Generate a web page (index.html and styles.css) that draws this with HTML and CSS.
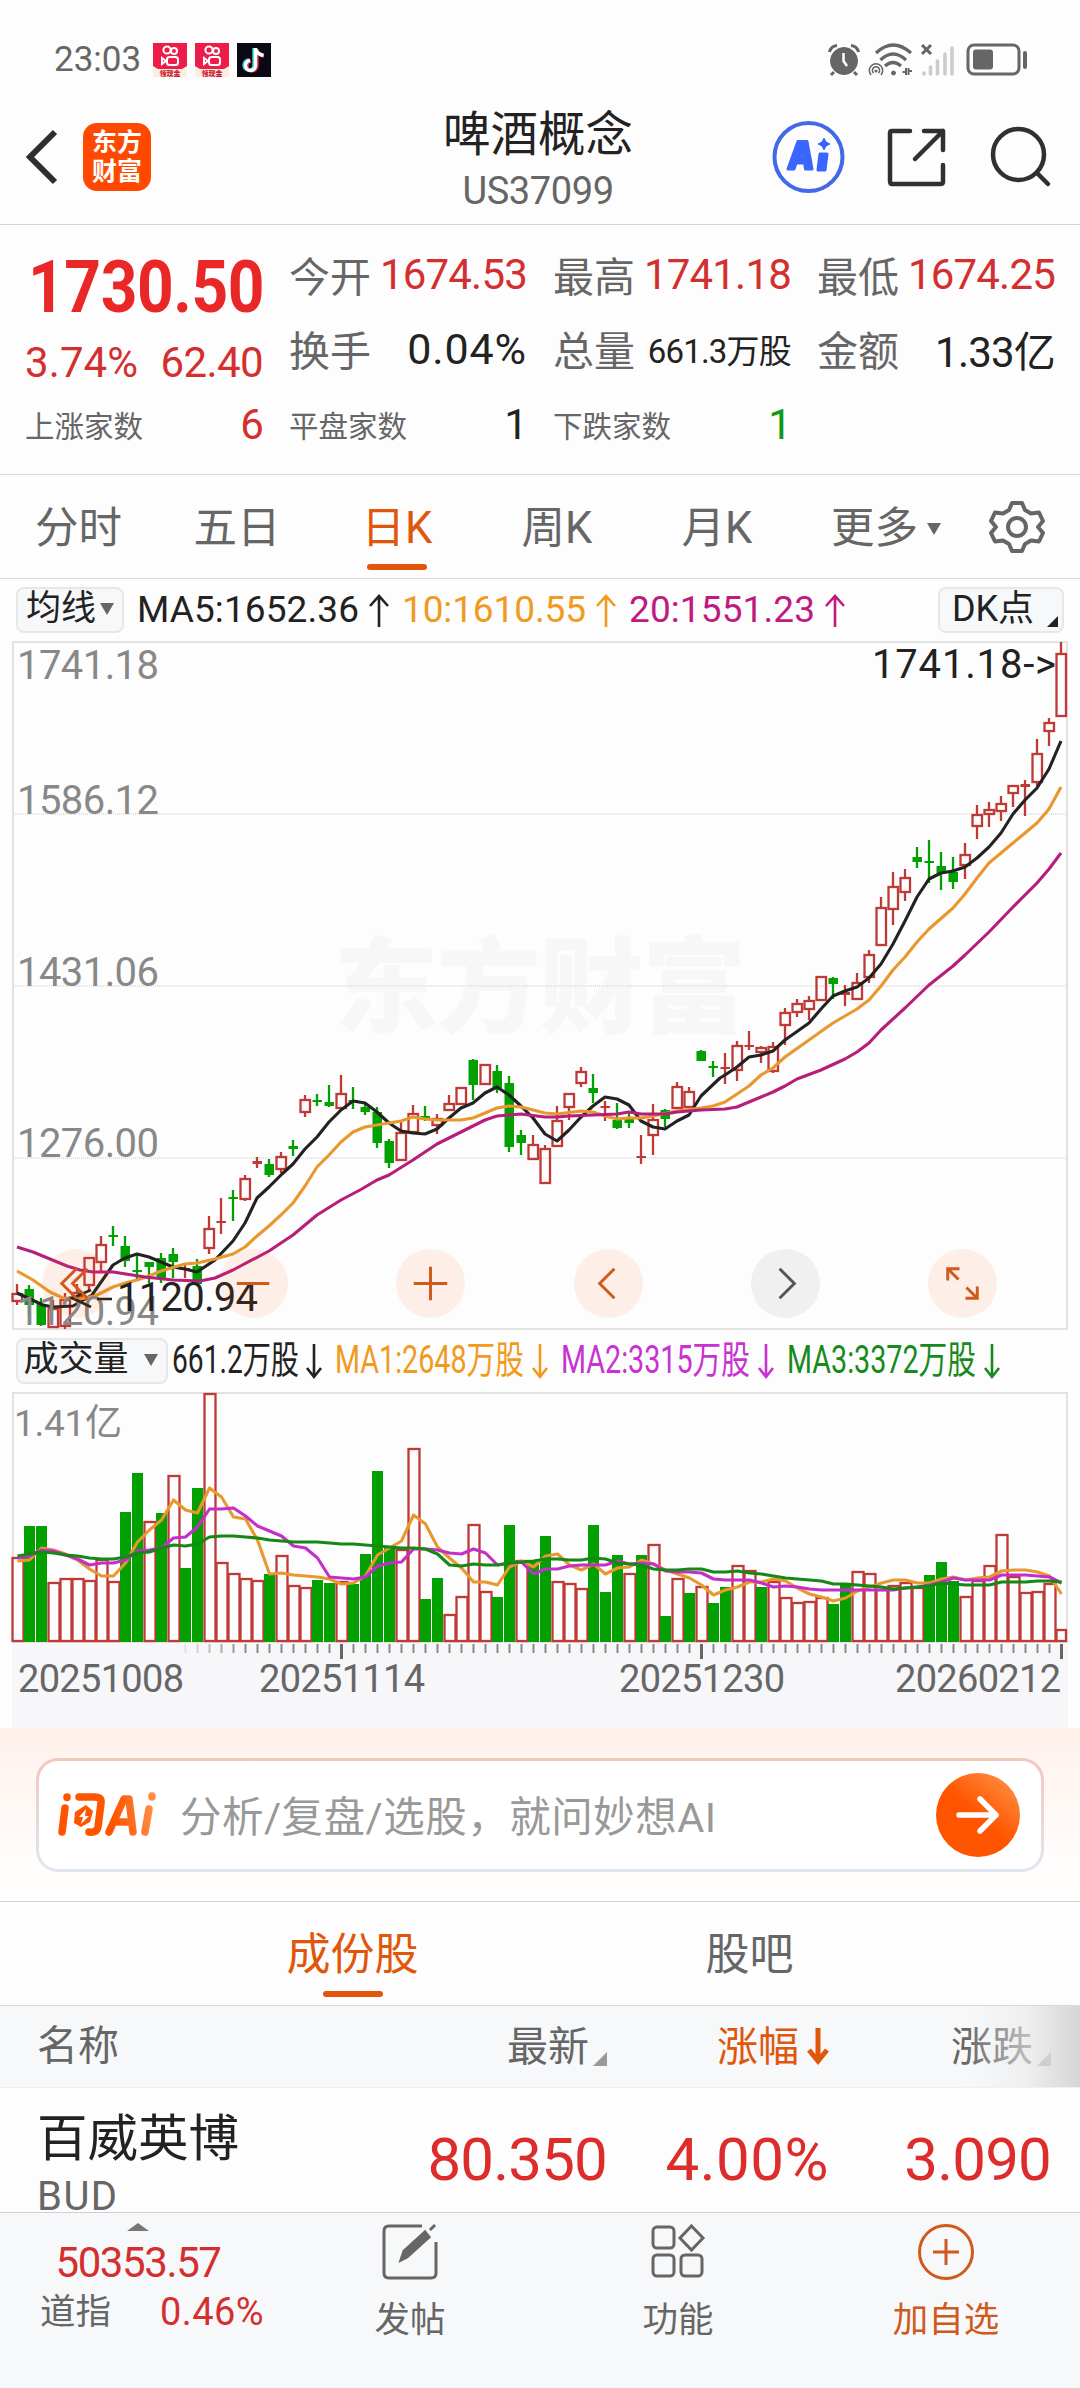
FILE: index.html
```html
<!DOCTYPE html>
<html lang="zh-CN">
<head>
    <meta charset="UTF-8">
    <title>啤酒概念 US37099</title>
    <link rel="stylesheet" href="styles.css">
</head>
<body>
  <div class="status-bar">
    <span class="clock">23:03</span>
    <svg class="app-badge" viewBox="0 0 34 34">
      <rect width="34" height="34" fill="#fdeedd"/>
      <path d="M0 0H34V23L29 26H5L0 23Z" fill="#ee1c4a"/>
      <g fill="none" stroke="#fff" stroke-width="2"><circle cx="14" cy="7" r="3.6"/><circle cx="21" cy="8" r="3"/><rect x="14" y="14" width="11" height="8" rx="2.5"/><path d="M13 18L9 15V21Z"/></g>
      <text x="17" y="33" font-size="7" font-weight="900" fill="#c81a35" text-anchor="middle">领现金</text>
    </svg>
    <svg class="app-badge" viewBox="0 0 34 34">
      <rect width="34" height="34" fill="#fdeedd"/>
      <path d="M0 0H34V23L29 26H5L0 23Z" fill="#ee1c4a"/>
      <g fill="none" stroke="#fff" stroke-width="2"><circle cx="14" cy="7" r="3.6"/><circle cx="21" cy="8" r="3"/><rect x="14" y="14" width="11" height="8" rx="2.5"/><path d="M13 18L9 15V21Z"/></g>
      <text x="17" y="33" font-size="7" font-weight="900" fill="#c81a35" text-anchor="middle">领现金</text>
    </svg>
    <svg class="app-badge" viewBox="0 0 34 34">
      <rect width="34" height="34" fill="#0b0a14"/>
      <g fill="none" stroke-width="3.4">
        <path d="M17 5V22A5 5 0 1 1 12 17M17 6Q19 11 26 12" stroke="#35d6dc"/>
        <path d="M20 6V23A5 5 0 1 1 14 18M20 7Q21 12 27 13" stroke="#e8304e"/>
        <path d="M18.500 5V22.500A5 5 0 1 1 13 17.500M18.500 6Q20 11 26.500 12.500" stroke="#fff"/>
      </g>
    </svg>
    <svg class="system-icons" viewBox="0 0 200 34">
      <g fill="#666" stroke="#666">
        <circle cx="16" cy="18" r="13.500"/>
        <path d="M1.500 9Q3 3 9 2.500M30.500 9Q29 3 23 2.500M6 29L3 32M26 29L29 32" fill="none" stroke-width="3"/>
        <path d="M15.500 10V18L19 23" fill="none" stroke="#fff" stroke-width="2.500"/>
        <g fill="none" stroke-width="3.200"><path d="M48 10Q65-6 83 10M52.500 17Q65 5 78 17M57 23Q65 16 73 23"/></g>
        <circle cx="65.500" cy="30" r="2"/>
        <g fill="none" stroke-width="1.500"><path d="M43 32A6.700 6.700 0 1 1 53 32M45.500 30A3.600 3.600 0 1 1 50.500 30"/><circle cx="48" cy="28" r=".8"/></g>
        <path d="M78 25V32M74.500 29H78M80.500 25V32M84 28H81" stroke-width="2" fill="none"/>
        <path d="M94 2L103 11M103 2L94 11" stroke-width="3"/>
      </g>
      <path d="M96 30V31M102.500 24V31M109.500 18V31M117 11V31M124 5V31" stroke="#ccc" stroke-width="3.600" stroke-linecap="round"/>
      <rect x="140" y="2" width="51" height="29" rx="6" fill="none" stroke="#666" stroke-width="3"/>
      <rect x="145" y="6.500" width="20" height="20" rx="3" fill="#666"/>
      <path d="M197 10V24" stroke="#666" stroke-width="4" stroke-linecap="round"/>
    </svg>
  </div>

  <div class="header">
    <svg class="back" viewBox="0 0 34 56"><path d="M29 3L4 28L29 53" fill="none" stroke="#2e2e2e" stroke-width="6"/></svg>
    <div class="app-logo"><span>东方</span><span>财富</span></div>
    <div class="title">
      <h1>啤酒概念</h1>
      <p>US37099</p>
    </div>
    <svg class="header-icons" viewBox="0 0 280 74">
      <circle cx="36.500" cy="37" r="34" fill="none" stroke="#4169e8" stroke-width="4"/>
      <g fill="#3a66ff" stroke="#3a66ff" stroke-width="3" stroke-linejoin="round">
        <path fill-rule="evenodd" d="M16 49L26 21.500H35L40 49H33.500L32.500 43H24L22 49ZM26.500 38H31.500L30.500 30Z"/>
        <path d="M48 34H55L53 50H46Z"/>
        <path d="M52 18L54 22L58 24L54 26L52 30L50 26L46 24L50 22Z" stroke-width="1"/>
      </g>
      <g fill="none" stroke="#303030" stroke-width="4.500" stroke-linecap="round" stroke-linejoin="round">
        <path d="M138 11H120Q118 11 118 13V61Q118 64 120 64H168Q171 64 171 62V45M152 11H171V30M171 11L143 39"/>
        <circle cx="246.500" cy="34.500" r="25.500"/>
        <path d="M265 53L276 64"/>
      </g>
    </svg>
  </div>

  <div class="quote">
    <div class="price-box">
      <div class="price">1730.50</div>
      <div class="change"><span class="wide">3.74%</span><span>62.40</span></div>
    </div>
    <div class="item"><label>今开</label><span class="up">1674.53</span></div>
    <div class="item"><label>最高</label><span class="up">1741.18</span></div>
    <div class="item"><label>最低</label><span class="up">1674.25</span></div>
    <div class="item second"><label>换手</label><span class="wide">0.04%</span></div>
    <div class="item second"><label>总量</label><span class="small">661.3万股</span></div>
    <div class="item second"><label>金额</label><span>1.33亿</span></div>
    <div class="item count"><label>上涨家数</label><span class="up">6</span></div>
    <div class="item count"><label>平盘家数</label><span>1</span></div>
    <div class="item count"><label>下跌家数</label><span class="down">1</span></div>
  </div>

  <div class="period-tabs">
    <span>分时</span>
    <span>五日</span>
    <span><b class="active">日K</b></span>
    <span>周K</span>
    <span>月K</span>
    <span class="more">更多<i class="triangle"></i></span>
    <svg class="gear" viewBox="0 0 54 54">
      <path d="M22 3H32L35 10L41 13.500L49 12.500L53 21L48 27L53 33L49 41.500L41 40.500L35 44L32 51H22L19 44L13 40.500L5 41.500L1 33L6 27L1 21L5 12.500L13 13.500L19 10Z"/>
      <circle cx="27" cy="27" r="9"/>
    </svg>
  </div>

  <div class="legend">
    <div class="pill">均线<i class="triangle"></i></div>
    <svg class="legend-text ma-text" viewBox="0 0 720 50">
      <g font-size="37">
        <text x="3" y="37" textLength="222" fill="#222">MA5:1652.36</text>
        <text x="268" y="37" textLength="184" fill="#f09a1e">10:1610.55</text>
        <text x="495" y="37" textLength="186" fill="#c01a80">20:1551.23</text>
      </g>
      <g fill="none" stroke-width="2.600">
        <path d="M245 42V12M236 21L245 11L254 21" stroke="#222"/>
        <path d="M472 42V12M463 21L472 11L481 21" stroke="#f09a1e"/>
        <path d="M701 42V12M692 21L701 11L710 21" stroke="#c01a80"/>
      </g>
    </svg>
    <div class="pill dk">DK点<i class="corner"></i></div>
  </div>

  <div class="kline">
    <svg id="klineChart" viewBox="0 640 1080 692"></svg>
    <div class="chart-tools">
      <button><svg viewBox="0 0 70 70"><path d="M35 20L20 35L35 50M46 20L31 35L46 50"/></svg></button>
      <button><svg viewBox="0 0 70 70"><path d="M18 35H51"/></svg></button>
      <button><svg viewBox="0 0 70 70"><path d="M18 35H52M35 18V52"/></svg></button>
      <button><svg viewBox="0 0 70 70"><path d="M41 20L26 35L41 50"/></svg></button>
      <button class="disabled"><svg viewBox="0 0 70 70"><path d="M29 20L44 35L29 50"/></svg></button>
      <button><svg viewBox="0 0 70 70"><path d="M20 32V20H32M20 20L31 31M38 50H50V38M50 50L39 39"/></svg></button>
    </div>
  </div>

  <div class="legend volume-legend">
    <div class="pill">成交量<i class="triangle"></i></div>
    <svg class="legend-text vol-text" viewBox="0 0 850 50">
      <g font-size="38">
        <text x="4" y="37" textLength="127" lengthAdjust="spacingAndGlyphs" fill="#222">661.2万股</text>
        <text x="167" y="37" textLength="189" lengthAdjust="spacingAndGlyphs" fill="#f09a1e">MA1:2648万股</text>
        <text x="393" y="37" textLength="189" lengthAdjust="spacingAndGlyphs" fill="#c832d0">MA2:3315万股</text>
        <text x="619" y="37" textLength="189" lengthAdjust="spacingAndGlyphs" fill="#178a1a">MA3:3372万股</text>
      </g>
      <g fill="none" stroke-width="2.600">
        <path d="M146 8V41M139 32L146 41L153 32" stroke="#222"/>
        <path d="M372 8V41M365 32L372 41L379 32" stroke="#f09a1e"/>
        <path d="M598 8V41M591 32L598 41L605 32" stroke="#c832d0"/>
        <path d="M824 8V41M817 32L824 41L831 32" stroke="#178a1a"/>
      </g>
    </svg>
  </div>

  <svg id="volumeChart" class="volume" viewBox="0 1388 1080 340"></svg>

  <div class="ask">
    <div class="ask-box">
      <svg class="ask-logo" viewBox="0 0 100 50">
        <defs><linearGradient id="askFill" gradientUnits="userSpaceOnUse" x1="0" y1="25" x2="100" y2="15"><stop offset=".55" stop-color="#ff5500"/><stop offset="1" stop-color="#ff9350"/></linearGradient></defs>
        <g fill="none" stroke="url(#askFill)" stroke-width="7.500" stroke-linecap="round" stroke-linejoin="round">
          <path d="M7 18L4 42M9 7V7.500M21 7H37Q44 7 43 13L40 37Q39 43 31 42"/>
          <path d="M51 42L66 9H71L75 42M60 32H72M91 19L87 42M94 6V7"/>
        </g>
        <path d="M28 15L17 22L16 33L23 37L32 32L35 21Z" fill="#ff5500"/>
        <path d="M28 19L21 27H25L23 34L31 26H27Z" fill="#fff"/>
      </svg>
      <span>分析/复盘/选股，就问妙想AI</span>
      <div class="send"><svg viewBox="0 0 84 84"><path d="M23 42H60M44 26L60 42L44 58"/></svg></div>
    </div>
  </div>

  <div class="list-tabs">
    <span class="active">成份股</span>
    <span>股吧</span>
  </div>

  <div class="table-head">
    <span>名称</span>
    <span>最新<i class="corner"></i></span>
    <span class="sorted">涨幅<svg viewBox="0 0 22 36"><path d="M11 0V32M2 22L11 33L20 22"/></svg></span>
    <span>涨跌<i class="corner"></i></span>
  </div>

  <div class="stock-row">
    <div class="stock-name"><strong>百威英博</strong><small>BUD</small></div>
    <span>80.350</span>
    <span class="wide">4.00%</span>
    <span>3.090</span>
  </div>

  <div class="bottom-bar">
    <div class="index">
      <i class="up-arrow"></i>
      <b>50353.57</b>
      <div><label>道指</label><em>0.46%</em></div>
    </div>
    <div class="action">
      <svg viewBox="0 0 60 60"><path d="M42 4H9Q4 4 4 9V51Q4 56 9 56H51Q56 56 56 51V20"/><path d="M21 38L24 29L45 10L49 15L27 35ZM50 8L55 3" fill="#666"/></svg>
      <span>发帖</span>
    </div>
    <div class="action">
      <svg viewBox="0 0 60 60"><rect x="5" y="5" width="21" height="21" rx="4"/><rect x="5" y="33" width="21" height="21" rx="4"/><rect x="33" y="33" width="21" height="21" rx="4"/><path d="M43.500 4L55 16L43.500 28L32 16Z"/></svg>
      <span>功能</span>
    </div>
    <div class="action add">
      <svg viewBox="0 0 60 60"><circle cx="30" cy="30" r="26.500"/><path d="M17 30H43M30 17V43"/></svg>
      <span>加自选</span>
    </div>
  </div>

  <script src="chart.js"></script>
</body>
</html>
```
FILE: styles.css
```css
* {
box-sizing: border-box;
margin: 0;
padding: 0;
}

body {
width: 1080px;
height: 2388px;
overflow: hidden;
background-color: #fdfdfd;
font-family: Roboto, "Noto Sans CJK SC", sans-serif;
color: #222;
}

svg {
display: block;
flex: none;
overflow: visible;
}

i, em {
font-style: normal;
}

/* status bar */
.status-bar {
display: flex;
align-items: center;
height: 100px;
padding: 20px 52px 0 54px;
gap: 8px;
}

.clock {
font-size: 35px;
line-height: 40px;
color: #666;
width: 91px;
}

.app-badge {
width: 34px;
height: 34px;
}

.system-icons {
width: 200px;
height: 34px;
margin-left: auto;
}

/* header */
.header {
display: flex;
align-items: center;
height: 125px;
padding: 0 28px 10px 26px;
border-bottom: 1px solid #d4d4d4;
}

.back {
width: 34px;
height: 56px;
}

.app-logo {
display: flex;
flex-direction: column;
justify-content: center;
align-items: center;
width: 68px;
height: 68px;
margin-left: 23px;
border-radius: 14px;
background-color: #ff4800;
color: #fff;
font-size: 25px;
font-weight: 700;
line-height: 29px;
}

.title {
flex: 1;
text-align: center;
padding: 8px 0 0 153px;
}

.title h1 {
font-size: 47.500px;
font-weight: 400;
line-height: 56px;
}

.title p {
font-size: 38px;
line-height: 48px;
letter-spacing: -0.4px;
color: #666;
margin-top: 4px;
}

.header-icons {
width: 280px;
height: 74px;
}

/* quote */
.quote {
display: grid;
grid-template-columns: repeat(4, 238px);
grid-template-rows: repeat(3, 75px);
column-gap: 26px;
height: 250px;
padding: 12px 25px 0;
border-bottom: 1px solid #d8d8d8;
}

.price-box {
grid-row: 1 / 3;
height: 150px;
margin-top: 13px;
color: #e92727;
}

.price {
width: 265px;
margin-left: 3px;
font-size: 72px;
font-weight: 700;
line-height: 75px;
letter-spacing: -0.5px;
transform: scaleX(0.89);
transform-origin: left;
}

.change {
display: flex;
justify-content: space-between;
font-size: 42px;
line-height: 75px;
letter-spacing: -0.6px;
color: #d42f2f;
}

.item {
display: flex;
justify-content: space-between;
align-items: center;
font-size: 42px;
letter-spacing: -0.8px;
white-space: nowrap;
padding-bottom: 1px;
}

.item.second {
padding-bottom: 4px;
}

.item.second span {
padding-top: 2px;
}

.item label {
font-size: 41px;
letter-spacing: 0;
color: #666;
}

.item .small {
font-size: 33px;
}

.item .wide {
font-size: 43px;
letter-spacing: 0.9px;
}

.change .wide {
letter-spacing: 0.1px;
}

.item.count label {
font-size: 29.500px;
}

.item .up {
color: #d42f2f;
}

.item .down {
color: #109a14;
}

/* period tabs */
.period-tabs {
display: grid;
grid-template-columns: 157px repeat(5, 160px) 120px;
justify-items: center;
height: 104px;
border-bottom: 1px solid #d8d8d8;
font-size: 43.500px;
line-height: 107px;
color: #666;
}

.active {
position: relative;
font-weight: 400;
color: #e0560b;
}

.active::after {
content: "";
position: absolute;
left: 50%;
bottom: 11px;
width: 60px;
height: 6px;
margin-left: -30px;
border-radius: 3px;
background-color: #e0560b;
}

.period-tabs .active::after {
bottom: -16px;
}

.more {
display: flex;
align-items: center;
padding-left: 18px;
}

.triangle {
display: inline-block;
border: 7px solid transparent;
border-top: 12px solid #666;
border-bottom: 0;
}

.more .triangle {
margin-left: 9px;
}

.gear {
width: 54px;
height: 54px;
margin-top: 25px;
fill: none;
stroke: #666;
stroke-width: 4;
stroke-linejoin: round;
}

/* indicator legends */
.legend {
display: flex;
align-items: center;
height: 61px;
padding: 0 16px;
}

.pill {
display: flex;
align-items: center;
justify-content: center;
gap: 4px;
width: 108px;
height: 46px;
padding-bottom: 2px;
border: 2px solid #e6e7ea;
border-radius: 8px;
background-color: #f7f8fa;
font-size: 35px;
line-height: 40px;
white-space: nowrap;
}

.legend-text {
height: 50px;
margin-left: 10px;
}

.ma-text {
width: 720px;
}

.vol-text {
width: 850px;
margin-left: 0;
}

.pill.dk {
position: relative;
width: 126px;
margin-left: auto;
padding-right: 16px;
font-size: 36px;
}

.corner {
display: inline-block;
border-left: 14px solid transparent;
border-bottom: 14px solid #999;
}

.dk .corner {
position: absolute;
right: 4px;
bottom: 4px;
border-left-width: 11px;
border-bottom: 11px solid #222;
}

.volume-legend {
height: 56px;
padding-top: 2px;
}

.volume-legend .pill {
width: 152px;
gap: 15px;
padding-right: 3px;
}

/* charts */
.kline {
position: relative;
height: 692px;
}

.chart-tools {
position: absolute;
left: 42px;
top: 609px;
width: 955px;
display: flex;
justify-content: space-between;
}

.chart-tools button {
width: 69px;
height: 69px;
border: none;
border-radius: 50%;
background-color: rgba(255, 90, 20, 0.09);
}

.chart-tools svg {
fill: none;
stroke: #d0591c;
stroke-width: 3;
}

.chart-tools .disabled {
background-color: #f0f0f0;
}

.chart-tools .disabled svg {
stroke: #555;
}

#klineChart, .volume {
width: 1080px;
}

.volume {
height: 340px;
}

/* ask box */
.ask {
height: 174px;
padding: 30px 36px 0;
background: linear-gradient(#fff1ec, #fffdfc 80%);
border-bottom: 1px solid #d4d4d4;
}

.ask-box {
display: flex;
align-items: center;
height: 114px;
padding: 0 21px 0 19px;
border: 3px solid transparent;
border-radius: 22px;
background: linear-gradient(#fff, #fff) padding-box, linear-gradient(#f4c6bd, #dfe7f1) border-box;
font-size: 41.500px;
letter-spacing: 0.5px;
color: #999;
}

.ask-box span {
padding-bottom: 3px;
}

.ask-logo {
width: 100px;
height: 50px;
margin-right: 22px;
}

.send {
width: 84px;
height: 84px;
margin-left: auto;
border-radius: 50%;
background: linear-gradient(40deg, #ff5500 50%, #ff9a50);
}

.send path {
fill: none;
stroke: #fff;
stroke-width: 5.500;
stroke-linecap: round;
stroke-linejoin: round;
}

/* list */
.list-tabs {
display: grid;
grid-template-columns: 397px 397px;
justify-content: center;
justify-items: center;
height: 104px;
padding-left: 22px;
border-bottom: 1px solid #d8d8d8;
font-size: 44px;
line-height: 106px;
color: #666;
}

.table-head {
position: relative;
display: grid;
grid-template-columns: 300px 270px 222px 222px;
align-items: center;
height: 82px;
padding: 0 0 7px 37px;
background-color: #f7f8fa;
border-bottom: 1px solid #f0f0f0;
font-size: 41px;
color: #666;
}

.table-head span {
display: flex;
align-items: center;
justify-content: flex-end;
}

.table-head span:first-child {
justify-content: flex-start;
padding-bottom: 2px;
}

.table-head .corner {
margin: 31px 0 0 4px;
}

.table-head .sorted {
color: #e0560b;
}

.sorted svg {
width: 22px;
height: 36px;
margin: 5px 0 0 8px;
fill: none;
stroke: #e0560b;
stroke-width: 5;
}

.table-head::after {
content: "";
position: absolute;
right: 0;
top: 0;
width: 115px;
height: 81px;
background: linear-gradient(90deg, rgba(240, 240, 240, 0), rgba(235, 235, 235, 0.6) 50%, #d6d6d6);
}

.stock-row {
display: grid;
grid-template-columns: 300px 270px 222px 222px;
height: 124px;
padding-left: 37px;
overflow: hidden;
}

.stock-row span {
font-size: 60px;
line-height: 144px;
letter-spacing: -0.8px;
text-align: right;
color: #dc2c2c;
}

.stock-row .wide {
letter-spacing: 0.5px;
}

.stock-name strong {
display: block;
font-size: 50.500px;
font-weight: 400;
line-height: 60px;
margin-top: 21px;
}

.stock-name small {
display: block;
font-size: 40px;
line-height: 40px;
letter-spacing: 1.5px;
margin-top: 8px;
color: #666;
}

/* bottom bar */
.bottom-bar {
display: grid;
grid-template-columns: 276px 268px 268px 268px;
height: 176px;
border-top: 1px solid #d0d0d0;
background-color: #f7f8fa;
}

.index {
display: flex;
flex-direction: column;
align-items: center;
padding-top: 10px;
}

.up-arrow {
border: 11px solid transparent;
border-bottom: 8px solid #777;
border-top: 0;
}

.index b {
font-size: 42px;
font-weight: 400;
line-height: 48px;
letter-spacing: -1.4px;
color: #d42f2f;
margin-top: 8px;
}

.index div {
display: flex;
justify-content: space-between;
width: 224px;
margin-left: 28px;
line-height: 50px;
font-size: 38px;
}

.index label {
font-size: 35.500px;
color: #666;
}

.index em {
color: #d42f2f;
letter-spacing: 0.4px;
}

.action {
display: flex;
flex-direction: column;
align-items: center;
padding-top: 9px;
font-size: 35.500px;
line-height: 50px;
color: #666;
}

.action svg {
width: 60px;
height: 60px;
margin-bottom: 13px;
fill: none;
stroke: #666;
stroke-width: 3;
}

.action.add {
color: #d0591c;
}

.action.add svg {
stroke: #d0591c;
}
```
FILE: chart.js
```js
const NS = "http://www.w3.org/2000/svg";
const RED = "#bf3a36";
const GREEN = "#02a000";

function add(parent, tag, attrs, text) {
    const el = document.createElementNS(NS, tag);
    for (const key in attrs) el.setAttribute(key, attrs[key]);
    if (text) el.textContent = text;
    parent.appendChild(el);
    return el;
}

// 12px per trading day
function dayX(i) {
    return 17 + i * 12;
}

// color, high, body top, body bottom, low
const candles = [
    "r 644 654 661 665", "g 645 649 665 675", "g 658 664 685 686", "r 660 669 687 687", "r 653 660 686 689",
    "r 644 653 657 660", "r 617 618 645 650", "r 596 605 622 631", "g 586 595 596 606", "g 596 606 621 627",
    "g 615 630 631 640", "g 622 622 627 643", "g 613 618 638 643", "g 608 614 622 638", "r 624 628 630 638",
    "g 619 626 644 646", "r 576 589 608 614", "r 558 581 583 594", "g 550 557 559 581", "r 535 539 559 561",
    "r 517 521 524 528", "g 519 524 535 537", "r 512 517 529 533", "g 500 506 509 516", "r 455 460 472 477",
    "g 454 460 461 466", "g 445 462 466 467", "r 435 454 468 470", "g 447 460 461 469", "g 462 467 472 475",
    "g 467 472 503 508", "g 499 501 523 528", "r 482 493 520 521", "r 465 474 492 494", "g 466 476 477 481",
    "r 474 479 485 494", "r 455 464 470 471", "r 447 448 464 465", "g 419 420 445 460", "r 424 425 444 445",
    "g 425 431 448 453", "g 436 443 507 512", "g 490 495 503 515", "r 495 505 519 520", "r 505 509 543 544",
    "r 466 481 506 507", "r 453 454 467 480", "r 427 432 443 447", "g 434 448 453 463", "r 461 466 467 481",
    "g 463 480 488 489", "g 473 479 483 488", "r 495 516 517 524", "r 464 480 495 515", "g 469 470 479 487",
    "r 442 447 468 469", "r 447 452 467 468", "g 410 411 421 421", "g 421 426 427 437", "r 413 427 429 444",
    "r 401 406 430 441", "r 391 405 407 410", "r 406 408 412 423", "r 402 407 431 433", "r 368 373 385 405",
    "r 359 364 372 377", "r 356 361 369 380", "r 336 337 360 361", "g 337 338 344 359", "r 345 352 355 366",
    "r 333 343 359 360", "r 310 315 337 343", "r 257 268 305 306", "r 232 247 269 285", "r 229 238 252 261",
    "g 207 217 222 228", "g 200 221 223 243", "g 212 226 233 250", "g 217 232 242 249", "r 203 215 225 239",
    "r 165 175 186 199", "r 162 170 174 187", "r 156 164 171 181", "r 145 146 153 167", "r 140 144 147 176",
    "r 99 114 142 146", "r 78 83 91 106", "r 2 14 76 76"
];

const ma5 = "17,653 43,665 53,667 73,666 92,655 113,625 125,618 137,614 149,617 161,622 173,627 185,629 197,632 215,620 233,601 245,583 257,558 269,547 282,534 293,524 305,509 317,497 329,482 341,470 353,461 365,463 377,472 389,483 401,491 413,493 425,494 437,489 449,478 461,468 473,463 485,453 497,447 509,455 521,466 533,478 545,494 557,501 569,490 581,477 593,466 605,457 617,459 629,465 641,481 653,487 665,489 677,481 689,475 701,456 720,438 725,435 737,427 749,417 761,415 773,411 785,400 809,383 821,369 833,356 845,351 857,347 869,338 881,324 893,304 905,281 917,257 929,239 941,233 953,231 965,227 977,218 989,207 1001,193 1013,174 1025,160 1037,148 1049,129 1061,101";
const ma10 = "17,631 33,640 50,652 63,658 80,659 95,656 113,647 125,643 137,640 149,636 161,631 185,624 197,623 215,619 233,614 245,607 257,596 269,586 282,574 293,563 305,546 317,527 329,515 341,502 353,492 365,487 389,483 401,481 413,477 425,479 437,480 461,480 473,478 485,473 497,468 509,466 521,467 545,473 557,474 581,471 593,472 605,476 617,479 629,478 641,478 653,476 677,471 701,468 713,466 725,462 737,454 749,446 761,435 773,428 785,417 809,400 833,383 845,376 857,369 869,360 881,346 893,330 905,317 917,302 929,289 953,268 965,254 977,238 989,223 1001,213 1013,203 1025,193 1037,183 1049,169 1061,147";
const ma20 = "17,607 33,612 67,626 80,630 93,632 113,632 145,637 173,640 200,641 215,638 233,630 269,611 293,595 317,575 341,560 360,550 377,540 389,535 413,520 437,504 461,492 485,480 497,476 509,475 521,474 545,477 557,477 569,476 593,475 617,474 629,472 641,474 665,474 677,472 701,470 725,469 737,467 749,462 773,452 785,446 797,439 821,430 845,419 857,412 869,403 881,390 905,368 929,345 953,326 965,315 989,292 1013,267 1025,255 1037,243 1049,229 1061,213";

function drawKline() {
    const svg = document.getElementById("klineChart");
    add(svg, "text", { x: 334, y: 1025, "font-size": 104, "font-weight": 900, textLength: 412, fill: "#f7f7f7" }, "东方财富");
    for (const y of [814, 986, 1158]) {
        add(svg, "line", { x1: 13, x2: 1067, y1: y, y2: y, stroke: "#e2e2e2", "stroke-width": 2, "stroke-dasharray": "1 1" });
    }
    add(svg, "rect", { x: 13, y: 642, width: 1054, height: 687, fill: "none", stroke: "#e2e2e2", "stroke-width": 2 });

    const g = add(svg, "g", { transform: "translate(0 640)" });
    candles.forEach((row, i) => {
        const [type, ...v] = row.split(" ");
        const [high, top, bottom, low] = v.map(Number);
        const color = type === "r" ? RED : GREEN;
        const x = dayX(i);
        add(g, "path", { d: `M${x} ${high}V${top}M${x} ${bottom}V${low}`, stroke: color, "stroke-width": 2.3 });
        if (type === "r" && bottom - top > 3) {
            add(g, "rect", { x: x - 4.5, y: top, width: 9.5, height: bottom - top, fill: "none", stroke: color, "stroke-width": 2.3 });
        } else {
            add(g, "rect", { x: x - 4.5, y: top, width: 9.5, height: Math.max(bottom - top, 2), fill: color });
        }
    });
    [[ma5, "#222"], [ma10, "#e8982c"], [ma20, "#b61e7c"]].forEach(([points, color]) => {
        add(g, "polyline", { points: points, fill: "none", stroke: color, "stroke-width": 3.1, "stroke-linejoin": "round" });
    });

    const labels = [["1741.18", 679], ["1586.12", 814], ["1431.06", 986], ["1276.00", 1157], ["1120.94", 1325]];
    for (const [text, y] of labels) {
        add(svg, "text", { x: 17, y: y, "font-size": 40, textLength: 142, fill: "#888" }, text);
    }
    // highest and lowest price markers
    add(svg, "text", { x: 872, y: 678, "font-size": 40, textLength: 184, fill: "#222" }, "1741.18->");
    add(svg, "path", { d: "M91 1290L72 1298L91 1307M97 1299H112", fill: "none", stroke: "#222", "stroke-width": 2.6 });
    add(svg, "text", { x: 117, y: 1311, "font-size": 40, textLength: 141, fill: "#222" }, "1120.94");
}

// color + top edge of each volume bar
const volumes = "r168 g136 g136 r193 r189 r189 r191 r170 r192 g122 g83 r132 g123 r86 g178 g98 r4 r173 r184 r189 r191 g184 r166 r196 r198 g190 g193 r192 g194 g164 g81 g157 r160 r59 g209 g188 r225 r207 r135 r202 g207 g135 r171 g172 g146 r192 r194 r199 g135 g202 g165 r184 g165 r155 g226 r189 g203 r197 g213 g197 r176 r181 g197 r192 r208 r213 r212 r208 g214 g193 r182 r184 r200 r196 r193 r198 g185 g172 g191 r207 r191 r176 r145 r187 r203 r202 r194 r240".split(" ");

const volMa1 = [171, 170, 158, 160, 164, 170, 179, 186, 186, 173, 152, 140, 130, 110, 120, 123, 98, 107, 127, 129, 150, 184, 183, 185, 186, 187, 189, 194, 193, 186, 165, 158, 151, 125, 134, 157, 168, 178, 192, 192, 195, 177, 171, 177, 166, 164, 175, 180, 174, 184, 178, 177, 170, 174, 180, 184, 188, 195, 205, 200, 197, 192, 192, 189, 191, 198, 204, 207, 211, 208, 201, 197, 193, 190, 190, 193, 193, 189, 187, 190, 188, 187, 181, 180, 180, 182, 186, 204];
const volMa2 = [168, 166, 160, 161, 165, 169, 175, 173, 173, 170, 161, 160, 158, 148, 147, 137, 119, 119, 118, 126, 136, 141, 146, 156, 158, 168, 187, 188, 189, 187, 176, 173, 172, 159, 159, 160, 163, 164, 159, 163, 175, 173, 172, 184, 179, 179, 176, 175, 175, 175, 171, 174, 173, 174, 181, 182, 182, 183, 189, 190, 190, 190, 193, 197, 196, 197, 199, 200, 200, 200, 200, 200, 200, 200, 198, 197, 195, 192, 188, 190, 190, 190, 185, 185, 185, 186, 187, 193];
const volMa3 = [166, 164, 162, 163, 165, 166, 168, 169, 169, 167, 163, 162, 158, 155, 156, 154, 147, 146, 146, 147, 148, 150, 151, 152, 152, 152, 153, 154, 154, 155, 156, 157, 158, 158, 159, 164, 175, 176, 174, 175, 175, 173, 172, 171, 169, 169, 170, 170, 168, 169, 173, 174, 175, 179, 180, 180, 179, 179, 182, 182, 181, 183, 184, 186, 188, 189, 190, 191, 194, 194, 195, 196, 197, 199, 198, 197, 196, 193, 194, 195, 195, 195, 192, 192, 192, 191, 191, 192];

function drawVolume() {
    const svg = document.getElementById("volumeChart");
    add(svg, "rect", { x: 12, y: 1643, width: 1056, height: 85, fill: "#f7f7fa" });
    add(svg, "rect", { x: 13, y: 1393, width: 1054, height: 249, fill: "none", stroke: "#e2e2e2", "stroke-width": 2 });
    add(svg, "text", { x: 14, y: 1436, "font-size": 37, textLength: 108, fill: "#888" }, "1.41亿");

    const g = add(svg, "g", { transform: "translate(0 1390)" });
    volumes.forEach((v, i) => {
        const top = Number(v.slice(1));
        const x = dayX(i);
        if (v[0] === "r") {
            add(g, "rect", { x: x - 4.5, y: top, width: Math.min(11, 1066 - x + 4.5), height: 251 - top, fill: "#fdfdfd", stroke: RED, "stroke-width": 2.3 });
        } else {
            add(g, "rect", { x: x - 5, y: top, width: 11, height: 252 - top, fill: GREEN });
        }
    });
    [[volMa1, "#e8982c"], [volMa2, "#c42fcb"], [volMa3, "#158816"]].forEach(([list, color]) => {
        const points = list.map((y, i) => (dayX(i) + 0.5) + "," + y).join(" ");
        add(g, "polyline", { points: points, fill: "none", stroke: color, "stroke-width": 3.1, "stroke-linejoin": "round" });
    });

    // date axis, the first ticks fade in
    for (let i = 14; i < 88; i++) {
        const major = i % 30 === 27;
        add(svg, "line", { x1: dayX(i) + 0.5, x2: dayX(i) + 0.5, y1: 1644, y2: major ? 1659 : 1653, stroke: major ? "#666" : "#888", "stroke-width": major ? 3 : 2, opacity: Math.min(1, (i - 13) / 6) });
    }
    const dates = [["20251008", 18], ["20251114", 259], ["20251230", 619], ["20260212", 895]];
    for (const [text, x] of dates) {
        add(svg, "text", { x: x, y: 1692, "font-size": 38, textLength: 166, fill: "#666" }, text);
    }
}

drawKline();
drawVolume();
```
